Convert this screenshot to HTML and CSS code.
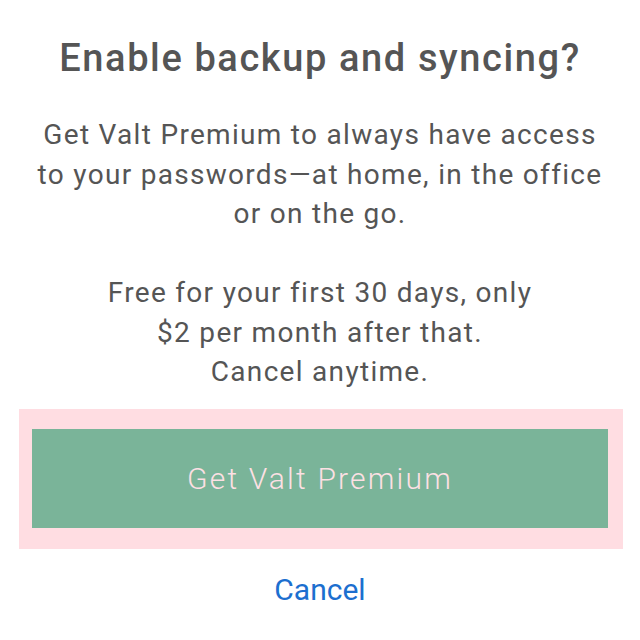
FILE: index.html
```html
<!DOCTYPE html>
<html>
<head>
<meta charset="utf-8">
<link rel="stylesheet" href="styles.css">
</head>
<body>
<div class="dialog">
  <h1 class="title">Enable backup and syncing?</h1>
  <p class="text">Get Valt Premium to always have access<br>to your passwords—at home, in the office<br>or on the go.</p>
  <p class="text text-price">Free for your first 30 days, only<br>$2 per month after that.<br>Cancel anytime.</p>
  <div class="cta-wrap">
    <button class="cta">Get Valt Premium</button>
  </div>
  <a class="cancel" href="#">Cancel</a>
</div>
</body>
</html>
```
FILE: styles.css
```css
html, body {
  margin: 0;
  padding: 0;
  background: #ffffff;
}
.dialog {
  width: 640px;
  display: flex;
  flex-direction: column;
  align-items: center;
  font-family: Roboto, "Liberation Sans", sans-serif;
  color: #555555;
  text-align: center;
}
.title {
  margin: 34px 0 0;
  font-size: 38px;
  line-height: 48px;
  font-weight: 500;
  letter-spacing: 1.6px;
  color: #555555;
}
.text {
  margin: 33px 0 0;
  font-size: 28px;
  line-height: 39.5px;
  font-weight: 400;
  letter-spacing: 1.3px;
}
.text-price {
  margin-top: 39.5px;
}
.cta-wrap {
  margin-top: 17.5px;
  margin-left: 2px;
  width: 604px;
  padding: 20px 15px 21px 13px;
  box-sizing: border-box;
  background: #ffdde2;
}
.cta {
  display: block;
  width: 100%;
  height: 99px;
  padding: 0;
  border: none;
  background: #7ab499;
  color: #fde0e4;
  font-family: Roboto, "Liberation Sans", sans-serif;
  font-size: 30px;
  font-weight: 300;
  letter-spacing: 2.2px;
}
.cancel {
  margin-top: 23px;
  font-size: 30px;
  line-height: 36px;
  color: #1c6fcf;
  text-decoration: none;
}
```
